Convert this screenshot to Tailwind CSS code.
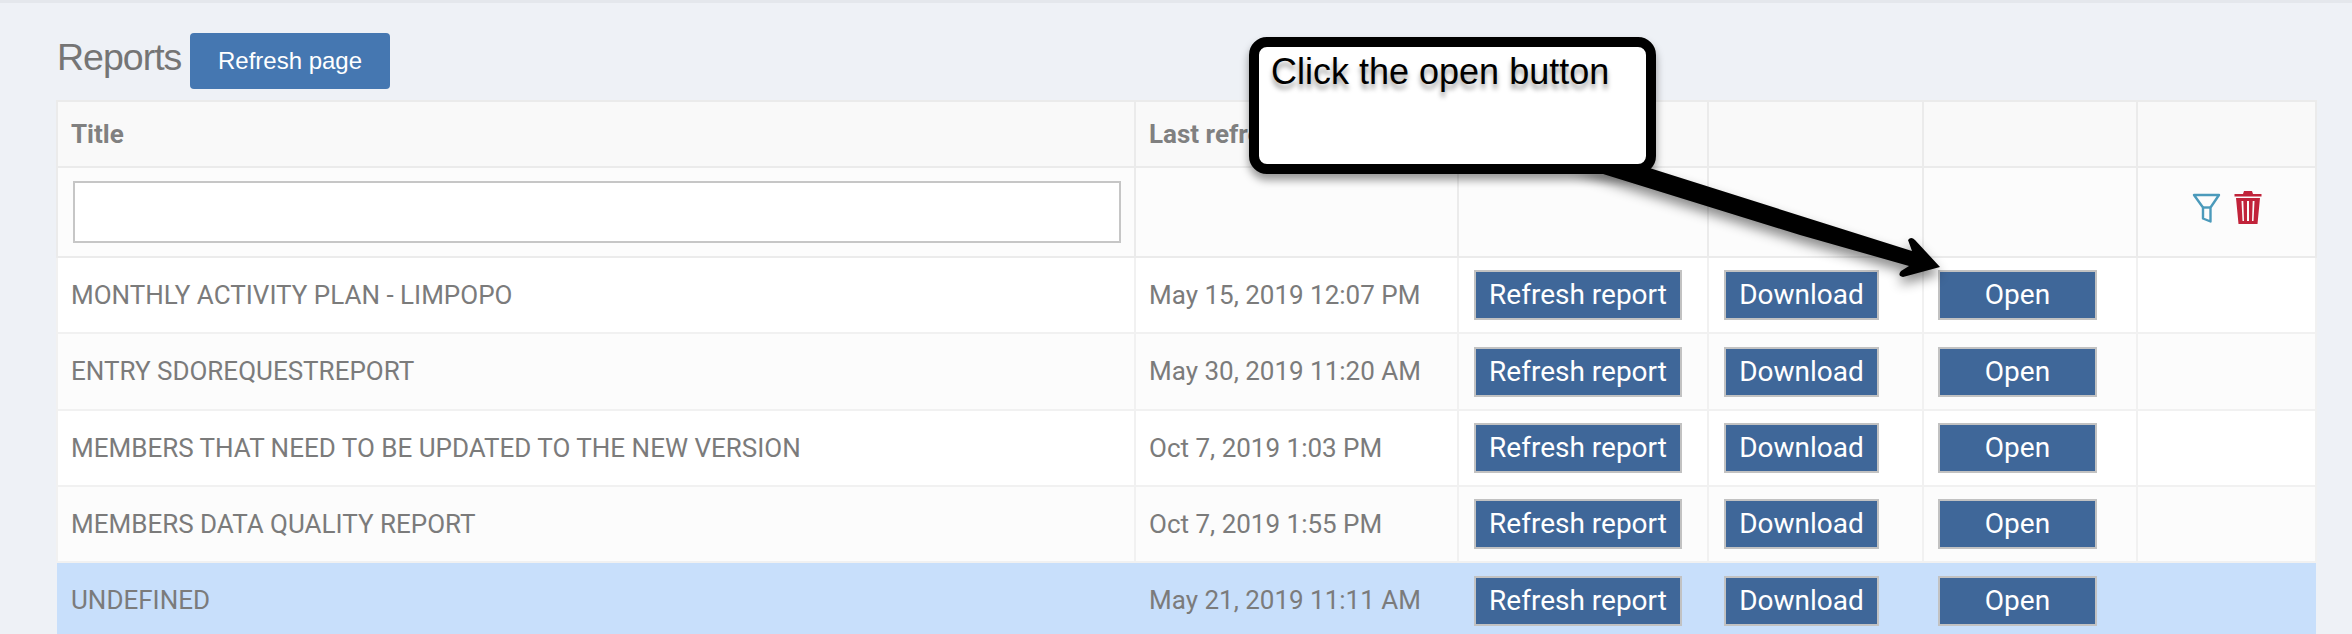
<!DOCTYPE html>
<html lang="en">
<head>
    <meta charset="UTF-8">
    <title>Reports</title>
    <script src="https://cdn.jsdelivr.net/npm/@tailwindcss/browser@4"></script>
</head>
<body class="relative h-[634px] overflow-hidden bg-[#eef1f6] font-['Roboto',sans-serif] text-[#7b7b7b]">

    <!-- Top bar shadow -->
    <div class="h-[3px] bg-[#e4e7ec]"></div>

    <div class="pl-[56px] pr-[36px]">
        <!-- Heading -->
        <div class="flex items-center h-[56px] mt-[30px] mb-[11px]">
            <h1 class="w-[134px] pl-px pb-[9px] font-['Liberation_Sans',sans-serif] text-[37.5px] leading-[48px] tracking-[-1px] text-[#757575]">Reports</h1>
            <button class="w-[200px] h-[56px] rounded-[4px] bg-[#4577b1] font-['Liberation_Sans',sans-serif] text-[24px] text-white">Refresh page</button>
        </div>

        <!-- Reports table -->
        <table class="w-[2259px] table-fixed border-collapse text-[26px]">
            <colgroup>
                <col class="w-[1078px]">
                <col class="w-[323px]">
                <col class="w-[250px]">
                <col class="w-[215px]">
                <col class="w-[214px]">
                <col class="w-[179px]">
            </colgroup>
            <thead>
                <tr class="h-[66px] bg-[#f9f9f9] text-left font-bold text-[#808080]">
                    <th class="border-2 border-[#ebebeb] px-[13px]">Title</th>
                    <th class="border-2 border-[#ebebeb] px-[13px]">Last refreshed</th>
                    <th class="border-2 border-[#ebebeb]"></th>
                    <th class="border-2 border-[#ebebeb]"></th>
                    <th class="border-2 border-[#ebebeb]"></th>
                    <th class="border-2 border-[#ebebeb]"></th>
                </tr>
                <tr class="h-[90px] bg-[#fcfcfc]">
                    <td class="border-2 border-[#ebebeb] pl-[15px] pr-[13px]">
                        <input type="text" class="block w-[1048px] h-[62px] bg-white border-2 border-[#c6c6c6]">
                    </td>
                    <td class="border-2 border-[#ebebeb]"></td>
                    <td class="border-2 border-[#ebebeb]"></td>
                    <td class="border-2 border-[#ebebeb]"></td>
                    <td class="border-2 border-[#ebebeb]"></td>
                    <td class="border-2 border-[#ebebeb]">
                        <div class="flex items-center gap-[13px] pl-[54px] pb-[10px]">
                            <svg class="w-[29px] h-[30px] mt-[2px]" viewBox="0 0 29 30" fill="none" stroke="#4b9abb" stroke-width="2.4" stroke-linejoin="round"><path d="M2 2h25L18.500 14.500V28.500L11 25.500V14.500Z"/><path d="M11 14.500h7.500"/></svg>
                            <svg class="w-[28px] h-[33px]" viewBox="0 0 28 33"><path fill="#c1233a" d="M10 0h8l1 3h8.500v2.500H.5V3H9zM2 7h24l-2.500 26h-19zM7.500 10l1 20h1.500l-.7-20zM13 10v20h2V10zM18.700 10l-.7 20h1.500l1-20z" fill-rule="evenodd"/></svg>
                        </div>
                    </td>
                </tr>
            </thead>
            <tbody>
                <tr class="h-[76px] bg-white">
                    <td class="border-2 border-[#f1f1f1] px-[13px]">MONTHLY ACTIVITY PLAN - LIMPOPO</td>
                    <td class="border-2 border-[#f1f1f1] px-[13px]">May 15, 2019 12:07 PM</td>
                    <td class="border-2 border-[#f1f1f1] pl-[15px]"><button class="block w-[208px] h-[50px] bg-[#3f6799] border-2 border-[#c2c2c2] text-[28px] text-white">Refresh report</button></td>
                    <td class="border-2 border-[#f1f1f1] pl-[15px]"><button class="block w-[155px] h-[50px] bg-[#3f6799] border-2 border-[#c2c2c2] text-[28px] text-white">Download</button></td>
                    <td class="border-2 border-[#f1f1f1] pl-[14px]"><button class="block w-[159px] h-[50px] bg-[#3f6799] border-2 border-[#c2c2c2] text-[28px] text-white">Open</button></td>
                    <td class="border-2 border-[#f1f1f1]"></td>
                </tr>
                <tr class="h-[77px] bg-[#fcfcfc]">
                    <td class="border-2 border-[#f1f1f1] px-[13px]">ENTRY SDOREQUESTREPORT</td>
                    <td class="border-2 border-[#f1f1f1] px-[13px]">May 30, 2019 11:20 AM</td>
                    <td class="border-2 border-[#f1f1f1] pl-[15px]"><button class="block w-[208px] h-[50px] bg-[#3f6799] border-2 border-[#c2c2c2] text-[28px] text-white">Refresh report</button></td>
                    <td class="border-2 border-[#f1f1f1] pl-[15px]"><button class="block w-[155px] h-[50px] bg-[#3f6799] border-2 border-[#c2c2c2] text-[28px] text-white">Download</button></td>
                    <td class="border-2 border-[#f1f1f1] pl-[14px]"><button class="block w-[159px] h-[50px] bg-[#3f6799] border-2 border-[#c2c2c2] text-[28px] text-white">Open</button></td>
                    <td class="border-2 border-[#f1f1f1]"></td>
                </tr>
                <tr class="h-[76px] bg-white">
                    <td class="border-2 border-[#f1f1f1] px-[13px]">MEMBERS THAT NEED TO BE UPDATED TO THE NEW VERSION</td>
                    <td class="border-2 border-[#f1f1f1] px-[13px]">Oct 7, 2019 1:03 PM</td>
                    <td class="border-2 border-[#f1f1f1] pl-[15px]"><button class="block w-[208px] h-[50px] bg-[#3f6799] border-2 border-[#c2c2c2] text-[28px] text-white">Refresh report</button></td>
                    <td class="border-2 border-[#f1f1f1] pl-[15px]"><button class="block w-[155px] h-[50px] bg-[#3f6799] border-2 border-[#c2c2c2] text-[28px] text-white">Download</button></td>
                    <td class="border-2 border-[#f1f1f1] pl-[14px]"><button class="block w-[159px] h-[50px] bg-[#3f6799] border-2 border-[#c2c2c2] text-[28px] text-white">Open</button></td>
                    <td class="border-2 border-[#f1f1f1]"></td>
                </tr>
                <tr class="h-[76px] bg-[#fcfcfc]">
                    <td class="border-2 border-[#f1f1f1] px-[13px]">MEMBERS DATA QUALITY REPORT</td>
                    <td class="border-2 border-[#f1f1f1] px-[13px]">Oct 7, 2019 1:55 PM</td>
                    <td class="border-2 border-[#f1f1f1] pl-[15px]"><button class="block w-[208px] h-[50px] bg-[#3f6799] border-2 border-[#c2c2c2] text-[28px] text-white">Refresh report</button></td>
                    <td class="border-2 border-[#f1f1f1] pl-[15px]"><button class="block w-[155px] h-[50px] bg-[#3f6799] border-2 border-[#c2c2c2] text-[28px] text-white">Download</button></td>
                    <td class="border-2 border-[#f1f1f1] pl-[14px]"><button class="block w-[159px] h-[50px] bg-[#3f6799] border-2 border-[#c2c2c2] text-[28px] text-white">Open</button></td>
                    <td class="border-2 border-[#f1f1f1]"></td>
                </tr>
                <tr class="h-[76px] bg-[#c8dffb]">
                    <td class="px-[14px]">UNDEFINED</td>
                    <td class="px-[14px]">May 21, 2019 11:11 AM</td>
                    <td class="pl-[16px]"><button class="block w-[208px] h-[50px] bg-[#3f6799] border-2 border-[#c2c2c2] text-[28px] text-white">Refresh report</button></td>
                    <td class="pl-[16px]"><button class="block w-[155px] h-[50px] bg-[#3f6799] border-2 border-[#c2c2c2] text-[28px] text-white">Download</button></td>
                    <td class="pl-[15px]"><button class="block w-[159px] h-[50px] bg-[#3f6799] border-2 border-[#c2c2c2] text-[28px] text-white">Open</button></td>
                    <td></td>
                </tr>
            </tbody>
        </table>
    </div>

    <!-- Annotation: arrow -->
    <svg class="absolute left-0 top-0 w-[2352px] h-[634px] pointer-events-none drop-shadow-[0_7px_6px_rgba(0,0,0,0.45)]" viewBox="0 0 2352 634">
        <path fill="#000000" d="M1574 165L1640 165L1912 251L1908 240Q1911 236 1915 240L1940 267L1903 277Q1897 276 1901 271L1909 266L1800 235Z"/>
    </svg>

    <!-- Annotation: callout -->
    <div class="absolute left-[1249px] top-[37px] w-[407px] h-[137px] rounded-[18px] border-[10px] border-black bg-white pl-[12px] pt-[1px] shadow-[0_6px_8px_rgba(0,0,0,0.4)]">
        <p class="font-['Liberation_Sans',sans-serif] text-[36px] leading-[48px] text-black [text-shadow:0_5px_5px_rgba(0,0,0,0.4)]">Click the open button</p>
    </div>

</body>
</html>
